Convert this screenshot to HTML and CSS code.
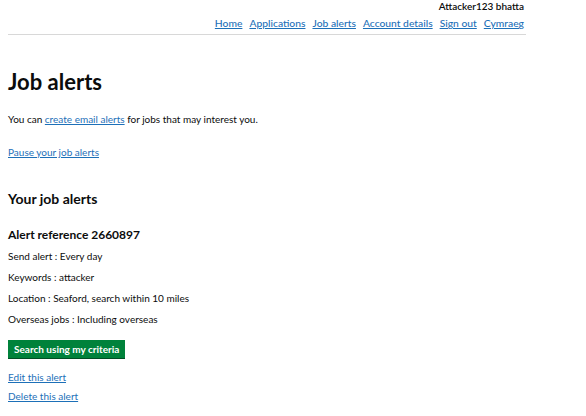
FILE: index.html
```html
<!DOCTYPE html>
<html lang="en">
  <head>
    <meta charset="UTF-8" />
    <title>Job alerts</title>
    <link rel="stylesheet" href="styles.css">
  </head>
  <body>
    <div class="page">
      <header class="header">
        <div class="user-name">Attacker123 bhatta</div>
        <nav class="nav">
          <a href="#">Home</a>
          <a href="#">Applications</a>
          <a href="#">Job alerts</a>
          <a href="#">Account details</a>
          <a href="#">Sign out</a>
          <a href="#">Cymraeg</a>
        </nav>
      </header>

      <main class="main">
        <h1>Job alerts</h1>
        <p class="intro">You can <a href="#">create email alerts</a> for jobs that may interest you.</p>
        <p class="pause"><a href="#">Pause your job alerts</a></p>

        <h2>Your job alerts</h2>

        <div class="alert">
          <h3>Alert reference 2660897</h3>
          <p>Send alert : Every day</p>
          <p>Keywords : attacker</p>
          <p>Location : Seaford, search within 10 miles</p>
          <p>Overseas jobs : Including overseas</p>
          <button type="button" class="btn">Search using my criteria</button>
          <p class="alert-link"><a href="#">Edit this alert</a></p>
          <p class="alert-link"><a href="#">Delete this alert</a></p>
        </div>
      </main>
    </div>
  </body>
</html>
```

FILE: styles.css
```css
body {
  font-family: "Lato", "Liberation Sans", sans-serif;
  margin: 0;
  padding: 0;
  background: #fff;
  color: #0b0c0c;
}
.page {
  width: 518px;
  margin-left: 8px;
}
a {
  color: #1d70b8;
  text-decoration: underline;
  text-underline-offset: 1px;
}
.header {
  border-bottom: 1px solid #d8d8d8;
  padding-bottom: 4px;
  text-align: right;
}
.user-name {
  font-size: 10px;
  font-weight: 600;
  line-height: 12px;
  padding-right: 2px;
}
.nav {
  display: flex;
  justify-content: flex-end;
  gap: 7px;
  margin-top: 4px;
  padding-right: 2px;
  font-size: 10.3px;
  font-weight: 500;
  line-height: 14px;
}
.main {
  padding-top: 34px;
}
h1 {
  font-size: 22px;
  line-height: 26px;
  margin: 0 0 18px;
}
p {
  font-size: 10px;
  line-height: 13px;
  margin: 0;
}
.intro {
  margin-bottom: 20px;
}
.pause {
  margin-bottom: 31px;
}
h2 {
  font-size: 14px;
  line-height: 17px;
  margin: 0 0 20px;
}
h3 {
  font-size: 12px;
  line-height: 15px;
  margin: 0 0 8px;
}
.alert p {
  margin-bottom: 8px;
}
.btn {
  display: block;
  background: #00823b;
  color: #fff;
  border: none;
  border-bottom: 1px solid #004e23;
  font-family: inherit;
  font-size: 10px;
  font-weight: bold;
  padding: 2px 6px;
  line-height: 14px;
  margin: 14px 0 12px;
  cursor: pointer;
}
.alert .alert-link {
  margin-bottom: 6px;
}
```
